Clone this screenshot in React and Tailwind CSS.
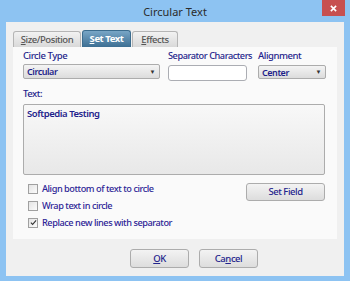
import React from "react";

const font = { fontFamily: '"Noto Sans", "Open Sans", sans-serif' };

function Btn({ children, className = "" }) {
  return (
    <div
      className={`flex items-center justify-center rounded-[3px] border border-[#acacac] bg-gradient-to-b from-[#f3f3f3] to-[#dddddd] text-[9.5px] font-medium leading-none text-[#23238c] ${className}`}
    >
      {children}
    </div>
  );
}

function Select({ value, className = "" }) {
  return (
    <div
      className={`flex items-center justify-between rounded-[2px] border border-[#acacac] bg-gradient-to-b from-[#f4f4f4] to-[#dcdcdc] pl-[3px] pr-[4px] text-[9px] font-semibold leading-none text-[#1e1e8a] ${className}`}
    >
      <span>{value}</span>
      <span className="text-[6px] text-[#333]">▼</span>
    </div>
  );
}

function Check({ checked, label }) {
  return (
    <div className="flex h-[17px] items-center">
      <div className="ml-[5px] flex h-[10px] w-[10px] items-center justify-center border border-[#a0a0a0] bg-gradient-to-br from-[#e4e4e4] to-[#fbfbfb]">
        {checked && (
          <svg width="7" height="7" viewBox="0 0 8 8">
            <path d="M1 4.2 L3 6.2 L7 1.5" fill="none" stroke="#333" strokeWidth="1.2" />
          </svg>
        )}
      </div>
      <span className="ml-[4px] text-[9.2px] font-medium leading-none text-[#2d2596]">{label}</span>
    </div>
  );
}

export default function App() {
  return (
    <div className="flex h-[281px] w-[350px] flex-col bg-[#8dc3f2] tracking-[-0.45px]" style={font}>
      <div className="relative flex h-[22px] items-center justify-center">
        <span className="mt-[1px] text-[11px] leading-none tracking-normal text-[#2b2b2b]">Circular Text</span>
        <div className="absolute right-[5px] top-0 flex h-[16px] w-[23px] items-center justify-center bg-[#c75050]">
          <svg width="7" height="7" viewBox="0 0 8 8">
            <path d="M1 1 L7 7 M7 1 L1 7" stroke="#fff" strokeWidth="1.8" />
          </svg>
        </div>
      </div>
      <div className="mx-[6px] flex h-[254px] flex-col bg-[#f0f0f0] px-[7px] pt-[8px]">
        <div className="flex h-[17px] items-end">
          <div className="flex h-[16px] w-[68px] items-center justify-center rounded-t-[3px] border border-b-0 border-[#b5b5b5] bg-gradient-to-b from-[#f2f2f2] to-[#d9d9d9] text-[9.5px] font-medium leading-none text-[#555]">
            <span><span className="underline">S</span>ize/Position</span>
          </div>
          <div className="ml-[1px] flex h-[17px] w-[49px] items-center justify-center rounded-t-[3px] border border-b-0 border-[#3b6c8e] bg-gradient-to-b from-[#78a6c6] to-[#3d6f93] text-[9.5px] font-bold leading-none text-white">
            <span><span className="underline">S</span>et Text</span>
          </div>
          <div className="ml-[1px] flex h-[16px] w-[46px] items-center justify-center rounded-t-[3px] border border-b-0 border-[#b5b5b5] bg-gradient-to-b from-[#f2f2f2] to-[#d9d9d9] text-[9.5px] font-medium leading-none text-[#555]">
            <span><span className="underline">E</span>ffects</span>
          </div>
        </div>
        <div className="flex h-[192px] w-[324px] flex-col bg-[#fafafa] pl-[10px] pt-[2px]">
          <div className="flex">
            <div className="flex w-[137px] flex-col">
              <span className="h-[14px] text-[9.5px] font-medium leading-[14px] text-[#1f1f8c]">Circle Type</span>
              <Select value="Circular" className="mt-[1px] h-[15px] w-[137px]" />
            </div>
            <div className="ml-[8px] flex w-[79px] flex-col">
              <span className="h-[14px] whitespace-nowrap text-[9.2px] font-medium leading-[14px] text-[#1f1f8c]">Separator Characters</span>
              <div className="mt-[2px] h-[16px] w-[79px] rounded-[3px] border border-[#abadb3] bg-white" />
            </div>
            <div className="ml-[11px] flex w-[68px] flex-col">
              <span className="h-[14px] text-[9.5px] font-medium leading-[14px] text-[#1f1f8c]">Alignment</span>
              <Select value="Center" className="mt-[2px] h-[14px] w-[68px]" />
            </div>
          </div>
          <span className="mt-[6px] h-[14px] text-[9.5px] font-medium leading-[14px] text-[#1f1f8c]">Text:</span>
          <div className="mt-[3px] h-[71px] w-[302px] rounded-[2px] border border-[#acacac] bg-gradient-to-b from-[#f8f8f8] to-[#e8e8e8] px-[3px] pt-[2px] text-[9.5px] font-semibold leading-[14px] text-[#1f1f8c]">
            Softpedia Testing
          </div>
          <div className="mt-[5px] flex w-[302px] justify-between">
            <div className="flex flex-col">
              <Check label="Align bottom of text to circle" />
              <Check label="Wrap text in circle" />
              <Check checked label="Replace new lines with separator" />
            </div>
            <Btn className="mt-[3px] h-[18px] w-[79px]">Set Field</Btn>
          </div>
        </div>
        <div className="mt-[10px] flex pl-[117px]">
          <Btn className="h-[19px] w-[59px]"><span><span className="underline">O</span>K</span></Btn>
          <Btn className="ml-[10px] h-[19px] w-[59px]"><span>Ca<span className="underline">n</span>cel</span></Btn>
        </div>
      </div>
    </div>
  );
}
